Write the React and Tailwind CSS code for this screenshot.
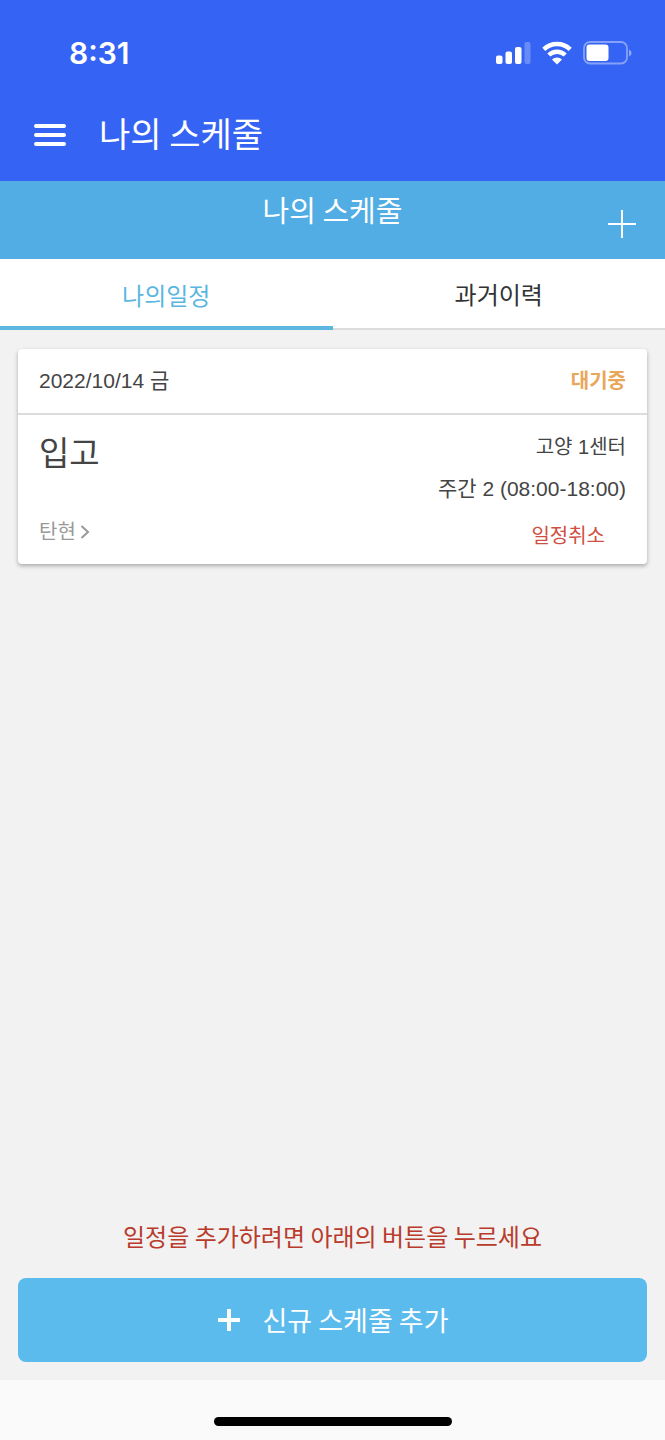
import { useState } from "react";

const StatusBar = () => (
  <div className="h-[88px] pl-[69px] pr-[33px] pt-[18px] flex items-center justify-between">
    <span className="font-['Inter',sans-serif] text-[30px] leading-9 font-semibold">
      8:31
    </span>

    <div className="flex items-center gap-[11px]">
      {/* signal */}
      <svg width="35" height="24" viewBox="0 0 35 24" fill="currentColor">
        <rect x="0" y="14.500" width="6.500" height="8.500" rx="2" />
        <rect x="9.500" y="10.500" width="6.500" height="12.500" rx="2" />
        <rect x="19" y="6" width="6.500" height="17" rx="2" />
        <rect x="28.500" y="1" width="6" height="22" rx="2" opacity="0.25" />
      </svg>

      {/* wifi */}
      <svg width="30" height="24" viewBox="0 0 30 24" fill="none" stroke="currentColor" strokeWidth="4.400">
        <path d="M1.800 8.400A19 19 0 0 1 28.200 8.400" />
        <path d="M6.800 14A12 12 0 0 1 23.200 14" />
        <path d="M15 23.500L10 18.400A7.400 7.400 0 0 1 20 18.400Z" fill="currentColor" stroke="none" />
      </svg>

      {/* battery */}
      <svg width="49" height="24" viewBox="0 0 49 24" fill="currentColor">
        <rect x="1" y="1" width="43" height="21.500" rx="6" fill="none" stroke="currentColor" strokeWidth="1.800" opacity="0.4" />
        <rect x="3.500" y="3.500" width="22" height="16.500" rx="3" />
        <path d="M46 8.500q2.600 1.200 2.600 3.500t-2.600 3.500z" opacity="0.45" />
      </svg>
    </div>
  </div>
);

const ScheduleCard = ({ item }) => (
  <article className="bg-white rounded-[4px] shadow-[0_2px_4px_rgba(0,0,0,0.3)] text-[#444] font-['Liberation_Sans','Noto_Sans_CJK_KR',sans-serif]">
    <div className="h-[66px] px-[21px] flex items-center justify-between border-b-2 border-[#dcdcdc] text-[21px] leading-7">
      <span>{item.date}</span>
      <span className="text-xl font-bold text-[#e8a75a]">{item.status}</span>
    </div>

    <div className="h-[149px] px-[21px] pt-[18px] pb-[14px] flex justify-between">
      <div className="flex flex-col justify-between items-start">
        <h2 className="text-[33px] leading-[42px]">{item.type}</h2>
        <button className="flex items-center gap-1 pb-1 text-xl leading-7 text-[#999]">
          {item.place}
          <svg width="10" height="16" viewBox="0 0 10 16" fill="none" stroke="currentColor" strokeWidth="2">
            <path d="M1.500 2L8 8L1.500 14" />
          </svg>
        </button>
      </div>

      <div className="flex flex-col gap-[14px] items-end text-[21px] leading-7">
        <span className="text-xl leading-7">{item.center}</span>
        <span>{item.shift}</span>
        <button className="mt-auto mr-[21px] text-xl leading-7 text-[#cf4f43]">일정취소</button>
      </div>
    </div>
  </article>
);

const schedules = [
  {
    date: "2022/10/14 금",
    status: "대기중",
    type: "입고",
    place: "탄현",
    center: "고양 1센터",
    shift: "주간 2 (08:00-18:00)",
  },
];

const App = () => {
  const [tab, setTab] = useState("mine");

  const tabClass = (name) =>
    tab === name
      ? "text-[#5bb6e0] border-b-4 border-[#5bb6e0] pt-1"
      : "text-[#333] border-b-2 border-[#dcdcdc]";

  return (
    <div className="min-h-screen flex flex-col bg-[#f2f2f2] font-['Noto_Sans_CJK_KR',sans-serif]">
      {/* HEADER */}
      <header className="bg-[#3564f4] text-white">
        <StatusBar />
        <div className="h-[93px] px-[33px] flex items-center gap-8">
          <button aria-label="메뉴">
            <svg width="34" height="24" viewBox="0 0 34 24" stroke="currentColor" strokeWidth="4" strokeLinecap="round">
              <path d="M3 3H31M3 12H31M3 21H31" />
            </svg>
          </button>
          <h1 className="pb-1 text-[34px] leading-10">나의 스케줄</h1>
        </div>
      </header>

      {/* SUB HEADER */}
      <div className="h-[78px] bg-[#51ade3] text-white grid grid-cols-[1fr_auto_1fr] px-7">
        <span className="col-start-2 pt-[10px] text-[29px] leading-9">나의 스케줄</span>
        <button aria-label="추가" className="justify-self-end self-center pt-2">
          <svg width="30" height="30" viewBox="0 0 30 30" stroke="currentColor" strokeWidth="2">
            <path d="M1 15H29M15 1V29" />
          </svg>
        </button>
      </div>

      {/* TABS */}
      <nav className="h-[71px] bg-white grid grid-cols-2 text-2xl">
        <button onClick={() => setTab("mine")} className={tabClass("mine")}>
          나의일정
        </button>
        <button onClick={() => setTab("past")} className={tabClass("past")}>
          과거이력
        </button>
      </nav>

      <main className="flex-1 flex flex-col px-[18px] pt-[19px] pb-[18px]">
        {tab === "mine" &&
          schedules.map((item) => <ScheduleCard key={item.date} item={item} />)}

        <p className="mt-auto mb-[26px] text-center text-2xl leading-8 text-[#b93b2b]">
          일정을 추가하려면 아래의 버튼을 누르세요
        </p>
        <button className="h-[84px] shrink-0 rounded-lg bg-[#5bbbed] text-white text-[27px] leading-9 flex items-center justify-center gap-[22px]">
          <svg width="24" height="24" viewBox="0 0 24 24" stroke="currentColor" strokeWidth="4">
            <path d="M1 12H23M12 1V23" />
          </svg>
          신규 스케줄 추가
        </button>
      </main>

      {/* HOME INDICATOR */}
      <footer className="h-[60px] bg-[#fafafa] flex justify-center items-end pb-[14px]">
        <div className="w-[238px] h-[9px] rounded-full bg-black" />
      </footer>
    </div>
  );
};

export default App;
